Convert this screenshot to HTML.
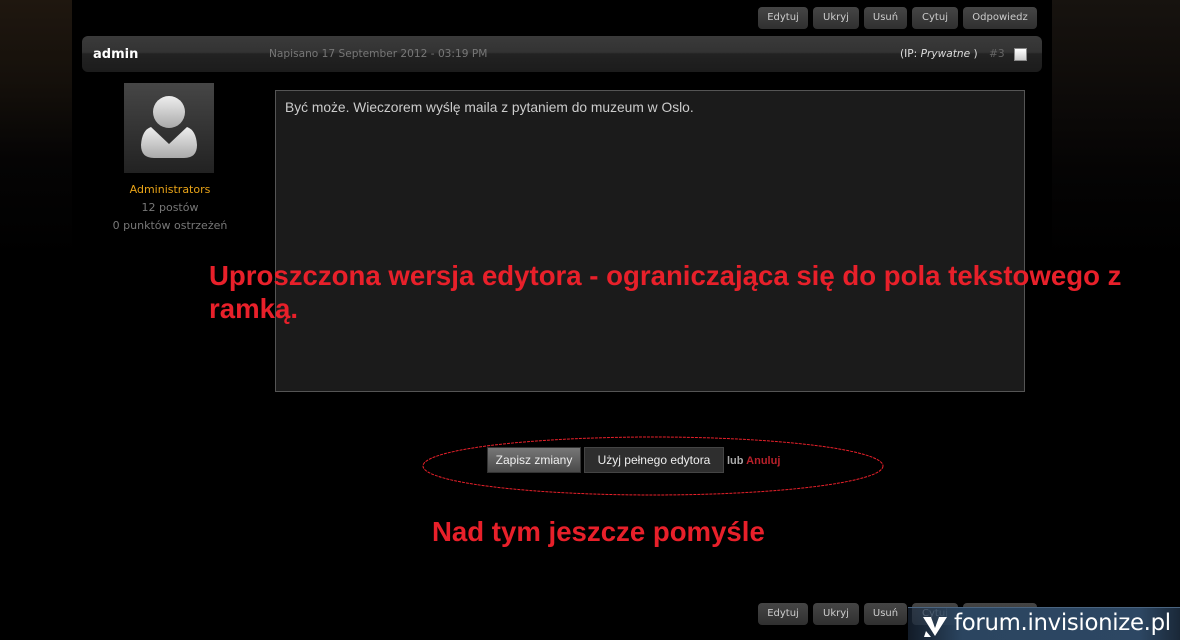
<!DOCTYPE html>
<html><head><meta charset="utf-8"><style>
*{margin:0;padding:0;box-sizing:border-box}
body{width:1180px;height:640px;background:#000;position:relative;overflow:hidden;font-family:"DejaVu Sans","Liberation Sans",sans-serif}
.l{position:absolute;left:0;top:0;width:72px;height:640px;background:linear-gradient(#1f170f 0,#15100b 80px,#050404 160px,#000 260px)}
.r{position:absolute;left:1052px;top:0;width:128px;height:640px;background:linear-gradient(#17130f 0,#0f0c0a 80px,#050404 170px,#000 260px)}
.btns{position:absolute;display:flex;gap:5px}
.b{height:22px;border-radius:4px;background:linear-gradient(#454545,#303030);color:#ccc;font-size:10px;line-height:22px;padding:0;text-align:center}
.hdr{position:absolute;left:82px;top:36px;width:960px;height:36px;border-radius:6px;background:linear-gradient(#3a3a3a 0,#333 45%,#222 50%,#1c1c1c 100%)}
.ed{position:absolute;left:275px;top:90px;width:750px;height:302px;background:#1b1b1b;border:1px solid #555;color:#ccc;font:13.8px "Liberation Sans",sans-serif;padding:9px 9px}
.red{position:absolute;color:#e8202a;font:bold 27.6px "Liberation Sans",sans-serif}
</style></head><body>
<div class="l"></div><div class="r"></div>
<div class="btns" style="left:758px;top:7px"><div class="b" style="width:50px">Edytuj</div><div class="b" style="width:46px">Ukryj</div><div class="b" style="width:43px">Usuń</div><div class="b" style="width:46px">Cytuj</div><div class="b" style="width:74px">Odpowiedz</div></div>
<div class="hdr">
<div style="position:absolute;left:11px;top:11px;color:#fff;font-weight:bold;font-size:13px">admin</div>
<div style="position:absolute;left:187px;top:12px;color:#777;font-size:10.6px">Napisano 17 September 2012 - 03:19 PM</div>
<div style="position:absolute;left:818px;top:12px;color:#ddd;font-size:10.6px">(IP: <i>Prywatne</i> )</div>
<div style="position:absolute;left:907px;top:12px;color:#666;font-size:10.6px">#3</div>
<div style="position:absolute;left:932px;top:12px;width:13px;height:13px;background:linear-gradient(#fff,#ccc);border:1px solid #888"></div>
</div>
<div style="position:absolute;left:124px;top:83px;width:90px;height:90px;background:linear-gradient(#464646,#222)">
<svg width="90" height="90"><defs><linearGradient id="g" x1="0" y1="0" x2="0" y2="1"><stop offset="0" stop-color="#eee"/><stop offset="1" stop-color="#aaa"/></linearGradient></defs>
<circle cx="45" cy="29" r="16" fill="url(#g)"/><path d="M27 44 Q18 47 17 62 Q17 75 30 75 L60 75 Q73 75 73 62 Q72 47 63 44 L45 61 Z" fill="url(#g)"/></svg></div>
<div style="position:absolute;left:82px;top:181px;width:176px;text-align:center;font-size:11px;line-height:18px;color:#777"><div style="color:#e8a317">Administrators</div><div>12 postów</div><div>0 punktów ostrzeżeń</div></div>
<div class="ed">Być może. Wieczorem wyślę maila z pytaniem do muzeum w Oslo.</div>
<div class="red" style="left:209px;top:259px;line-height:33px;width:950px">Uproszczona wersja edytora - ograniczająca się do pola tekstowego z ramką.</div>
<svg style="position:absolute;left:420px;top:435px" width="470" height="62"><ellipse cx="233" cy="31" rx="230" ry="29" fill="none" stroke="#e8202a" stroke-width="1" stroke-dasharray="3 1"/></svg>
<div style="position:absolute;left:487px;top:447px;width:94px;height:26px;background:linear-gradient(#777,#4a4a4a);border:1px solid #333;color:#eee;font-size:12px;line-height:24px;text-align:center;font-family:'Liberation Sans',sans-serif">Zapisz zmiany</div>
<div style="position:absolute;left:584px;top:447px;width:140px;height:26px;background:#2e2e2e;border:1px solid #444;color:#eee;font-size:12px;line-height:24px;text-align:center;font-family:'Liberation Sans',sans-serif">Użyj pełnego edytora</div>
<div style="position:absolute;left:727px;top:455px;font-size:11px;color:#aaa;font-weight:bold;font-family:'Liberation Sans',sans-serif">lub <span style="color:#b8202a">Anuluj</span></div>
<div class="red" style="left:432px;top:516px">Nad tym jeszcze pomyśle</div>
<div class="btns" style="left:758px;top:603px"><div class="b" style="width:50px">Edytuj</div><div class="b" style="width:46px">Ukryj</div><div class="b" style="width:43px">Usuń</div><div class="b" style="width:46px">Cytuj</div><div class="b" style="width:74px">Odpowiedz</div></div>
<div style="position:absolute;left:908px;top:607px;width:272px;height:33px;background:linear-gradient(90deg,rgba(30,45,65,.6),#2b4560 20%,#2d4763 85%,#1a2838);border-top:1px solid #4a6480">
<svg style="position:absolute;left:14px;top:6px" width="26" height="24"><path d="M1 3 L9 3 L13 14 L17 3 L25 3 L13 22 Z" fill="#fff"/><path d="M4 17 L9 23 L2 23Z" fill="#fff"/></svg>
<div style="position:absolute;left:46px;top:2px;color:#fff;font-size:22.8px;font-family:'DejaVu Sans',sans-serif;letter-spacing:-0.3px">forum.invisionize.pl</div></div>
</body></html>
